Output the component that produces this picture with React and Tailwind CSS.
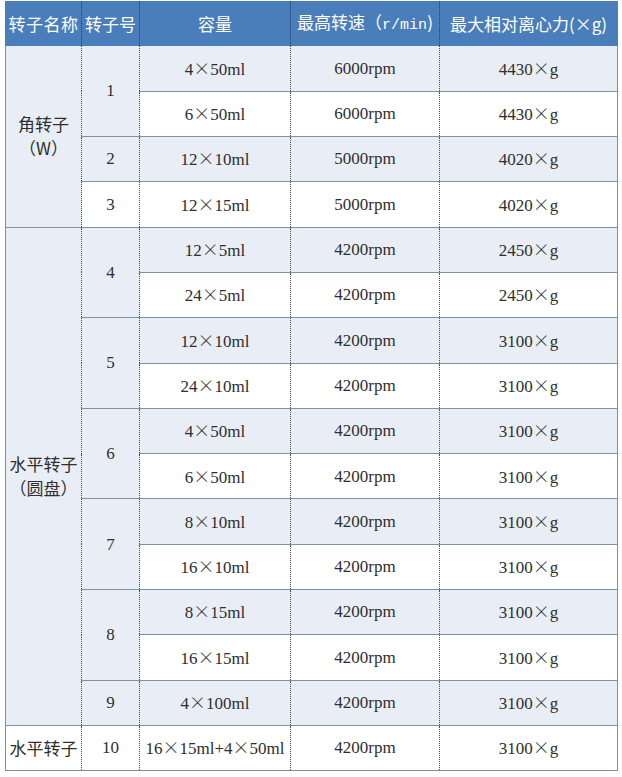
import React from "react";

const rows = [
  { name: "角转子", sub: "（W）", nameSpan: 4, no: "1", noSpan: 2, cap: ["4", "50ml"], speed: "6000rpm", g: "4430" },
  { cap: ["6", "50ml"], speed: "6000rpm", g: "4430" },
  { no: "2", noSpan: 1, cap: ["12", "10ml"], speed: "5000rpm", g: "4020" },
  { no: "3", noSpan: 1, cap: ["12", "15ml"], speed: "5000rpm", g: "4020" },
  { name: "水平转子", sub: "（圆盘）", nameSpan: 11, no: "4", noSpan: 2, cap: ["12", "5ml"], speed: "4200rpm", g: "2450" },
  { cap: ["24", "5ml"], speed: "4200rpm", g: "2450" },
  { no: "5", noSpan: 2, cap: ["12", "10ml"], speed: "4200rpm", g: "3100" },
  { cap: ["24", "10ml"], speed: "4200rpm", g: "3100" },
  { no: "6", noSpan: 2, cap: ["4", "50ml"], speed: "4200rpm", g: "3100" },
  { cap: ["6", "50ml"], speed: "4200rpm", g: "3100" },
  { no: "7", noSpan: 2, cap: ["8", "10ml"], speed: "4200rpm", g: "3100" },
  { cap: ["16", "10ml"], speed: "4200rpm", g: "3100" },
  { no: "8", noSpan: 2, cap: ["8", "15ml"], speed: "4200rpm", g: "3100" },
  { cap: ["16", "15ml"], speed: "4200rpm", g: "3100" },
  { no: "9", noSpan: 1, cap: ["4", "100ml"], speed: "4200rpm", g: "3100" },
  { name: "水平转子", nameSpan: 1, no: "10", noSpan: 1, cap: ["16", "15ml+4", "50ml"], speed: "4200rpm", g: "3100" },
];

const X = () => (
  <span className="font-['Noto_Sans_CJK_SC',sans-serif] font-light">×</span>
);

function Cap({ parts }) {
  return (
    <>
      {parts.map((p, i) => (
        <React.Fragment key={i}>
          {i > 0 && <X />}
          {p}
        </React.Fragment>
      ))}
    </>
  );
}

// dotted vertical separators, solid horizontal rules
const cell =
  "border-b border-solid border-b-[#7a91a6] border-l border-l-[#4a4a4a] [border-left-style:dotted] text-center align-middle";

export default function App() {
  return (
    <div className="bg-white w-[622px] h-[777px] pt-[1px] pl-[5px]">
      <table className="border-collapse table-fixed w-[612px] text-[#2e2e2e] font-['Liberation_Serif','Noto_Sans_CJK_SC',serif] text-[17px]">
        <colgroup>
          <col className="w-[76px]" />
          <col className="w-[58px]" />
          <col className="w-[151px]" />
          <col className="w-[149px]" />
          <col className="w-[178px]" />
        </colgroup>
        <thead>
          <tr className="h-[45px] bg-[#4a7ebb] text-white font-['Noto_Sans_CJK_SC',sans-serif] text-[17px]">
            <th className="font-normal whitespace-nowrap border-l border-l-[#4a7ebb] tracking-[0.5px]">转子名称</th>
            <th className="font-normal whitespace-nowrap border-l border-dotted border-l-[#1f3f66]">转子号</th>
            <th className="font-normal border-l border-dotted border-l-[#1f3f66]">容量</th>
            <th className="font-normal whitespace-nowrap border-l border-dotted border-l-[#1f3f66]">
              最高转速（<span className="font-['Liberation_Mono',monospace] text-[15px]">r/min</span>)
            </th>
            <th className="font-normal whitespace-nowrap border-l border-dotted border-l-[#1f3f66] border-r border-r-[#4a7ebb]">
              最大相对离心力(×g)
            </th>
          </tr>
        </thead>
        <tbody>
          {rows.map((r, i) => {
            const bg = i % 2 === 0 ? "bg-[#e9eef6]" : "bg-white";
            return (
              <tr key={i} className={`h-[45.3px] ${bg}`}>
                {r.name && (
                  <td
                    rowSpan={r.nameSpan}
                    className="border-b border-l border-solid border-[#7a91a6] text-center align-middle font-['Noto_Sans_CJK_SC',sans-serif] text-[17px] leading-[24px] whitespace-nowrap"
                  >
                    <div>{r.name}</div>
                    {r.sub && <div>{r.sub}</div>}
                  </td>
                )}
                {r.no && (
                  <td rowSpan={r.noSpan} className={cell}>
                    {r.no}
                  </td>
                )}
                <td className={`${cell} whitespace-nowrap`}>
                  <Cap parts={r.cap} />
                </td>
                <td className={cell}>{r.speed}</td>
                <td className={`${cell} border-r border-r-[#7a91a6] [border-right-style:solid]`}>
                  {r.g}
                  <X />g
                </td>
              </tr>
            );
          })}
        </tbody>
      </table>
    </div>
  );
}
